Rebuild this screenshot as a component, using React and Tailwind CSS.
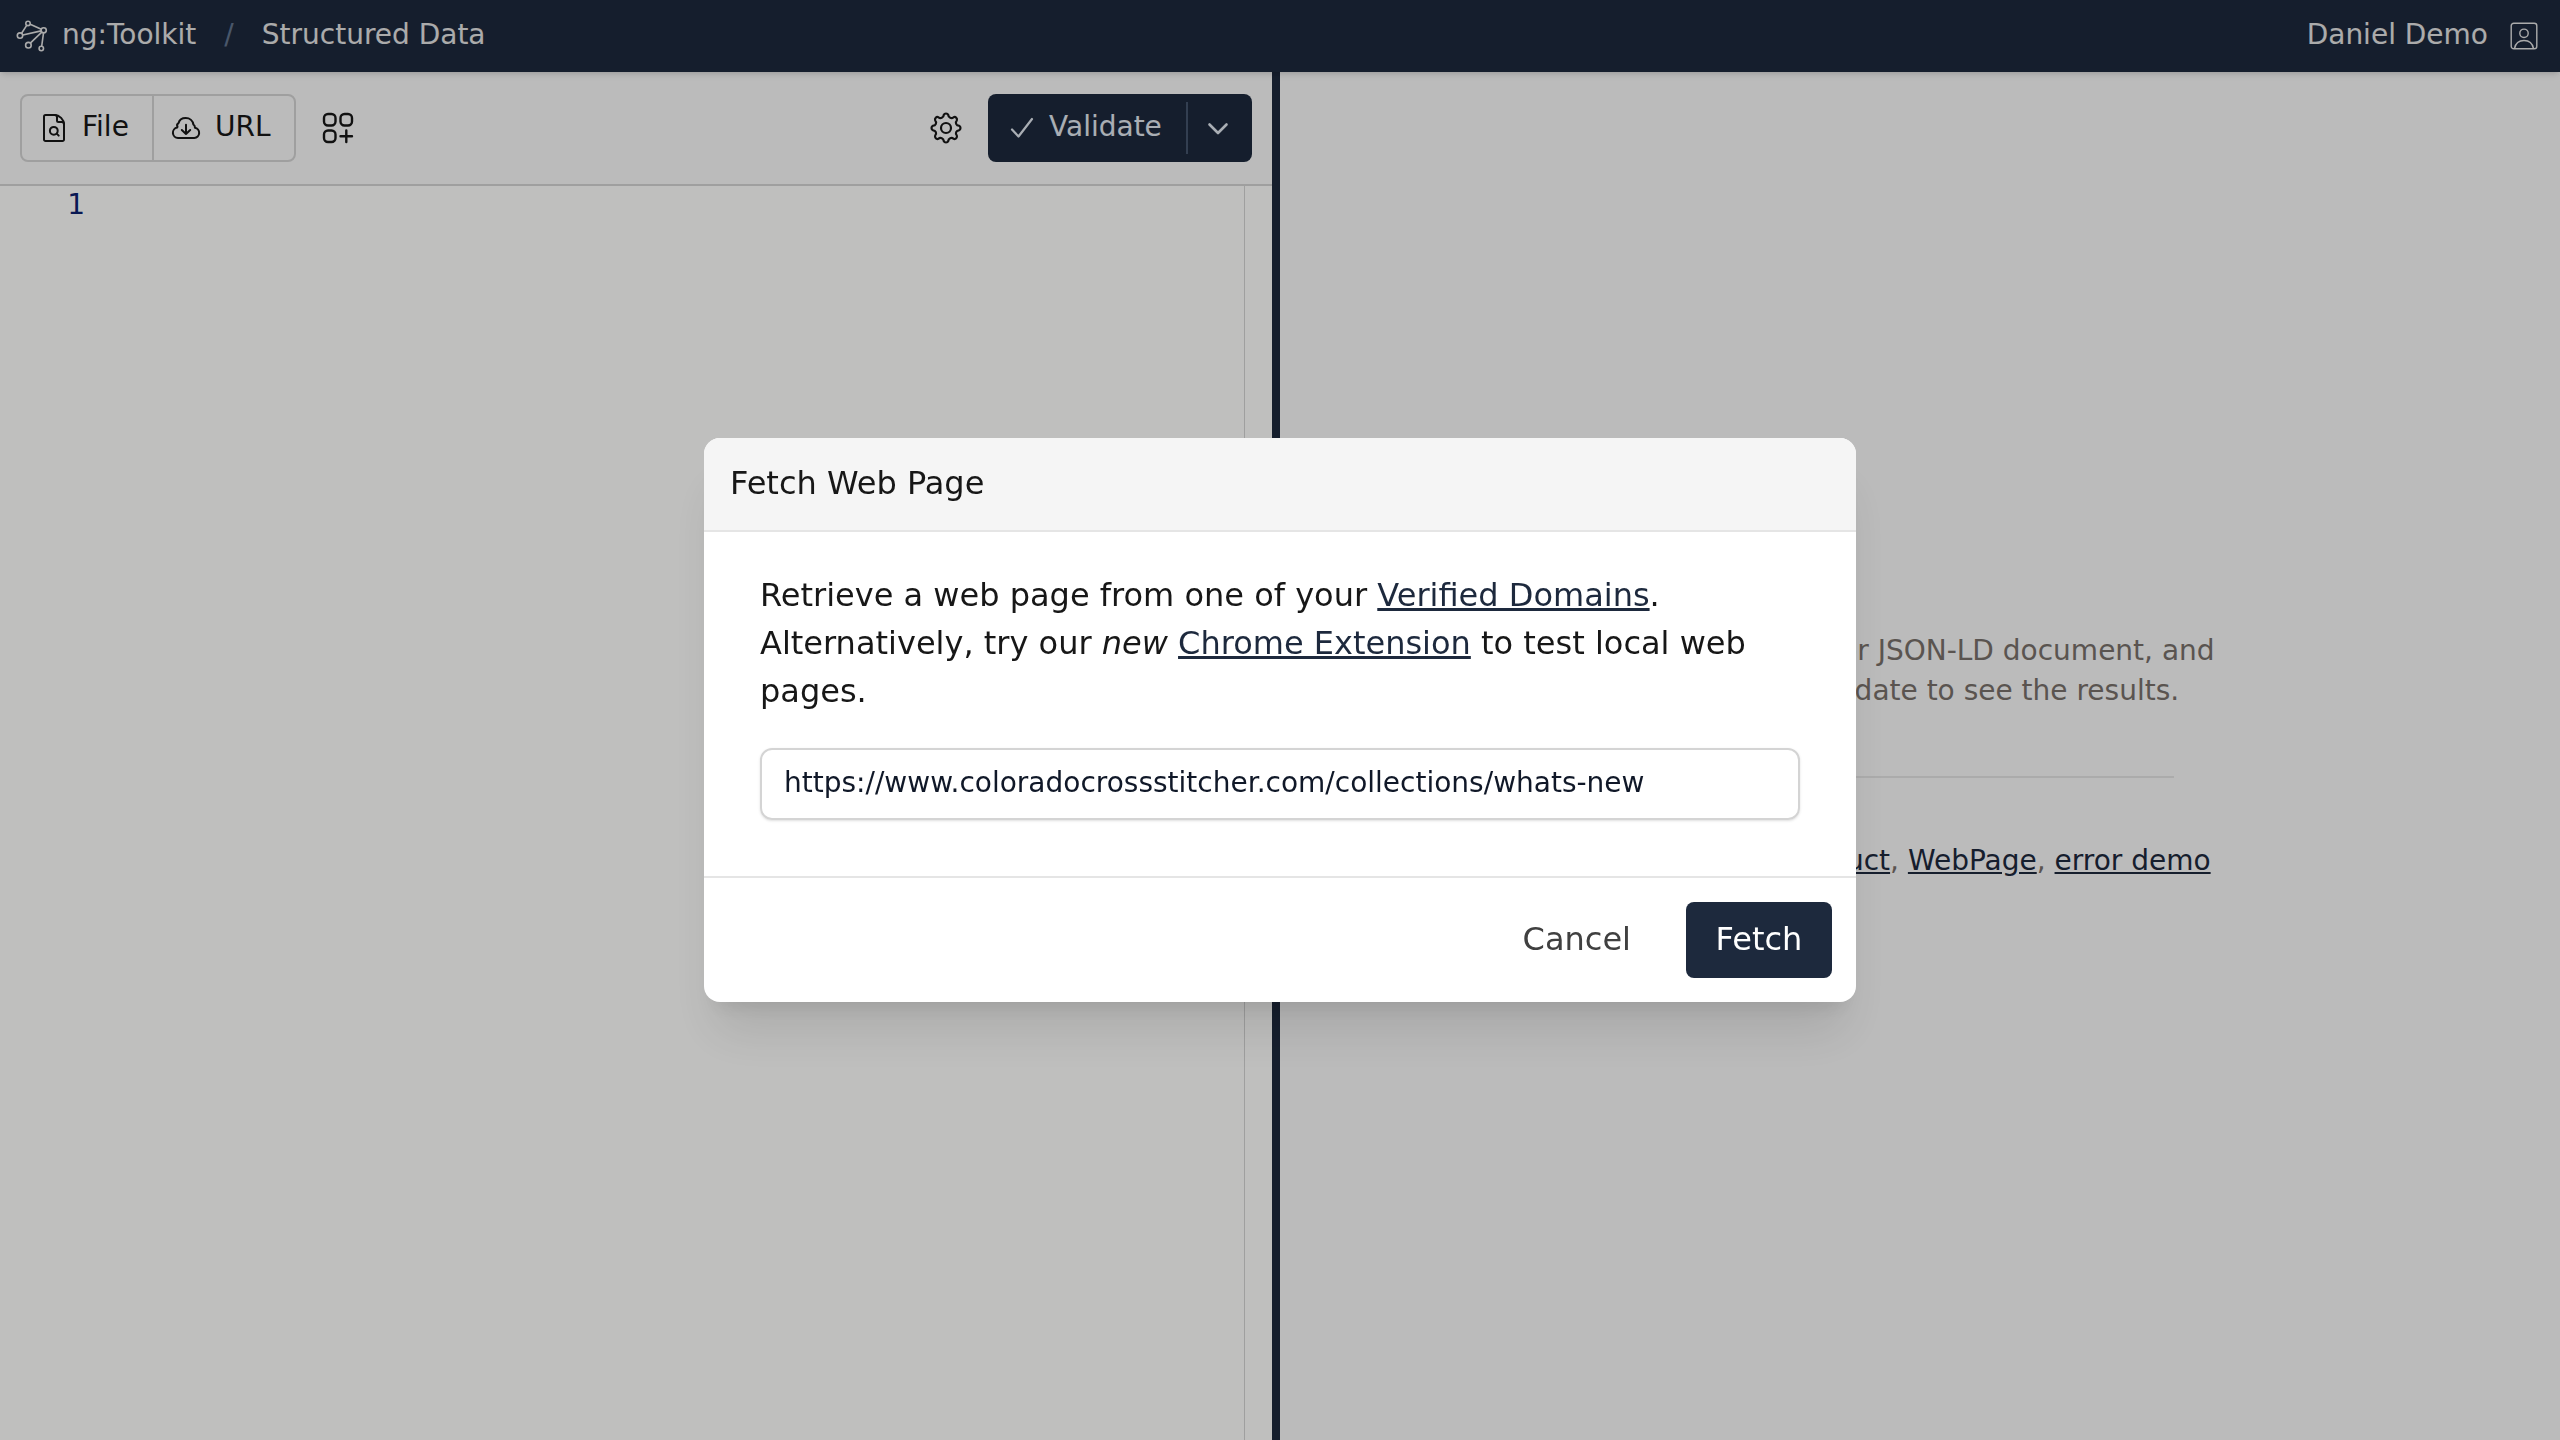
const LINK = "underline text-slate-800";

function GraphLogo() {
  return (
    <svg width="32" height="32" viewBox="0 0 32 32" fill="none" stroke="currentColor" strokeWidth="1.6">
      <circle cx="12" cy="3.4" r="2.2" />
      <circle cx="4" cy="15.6" r="2.7" />
      <circle cx="27.7" cy="10.3" r="2.6" />
      <circle cx="12.4" cy="25.2" r="2.8" />
      <circle cx="25.3" cy="28.5" r="2.2" />
      <path d="M10.7 5.4 5.6 13.2M14.2 4.3 25.3 9.3M6.8 15 25.1 10.9M14.3 23.2 25.8 12.2M27.5 13.1 25.7 26.2" />
    </svg>
  );
}

function FileSearchIcon() {
  return (
    <svg width="24" height="30" viewBox="0 0 24 30" fill="none" stroke="currentColor" strokeWidth="2" strokeLinecap="round" strokeLinejoin="round">
      <path d="M12.5 2H3.5A1.5 1.5 0 0 0 2 3.5v23A1.5 1.5 0 0 0 3.5 28h17a1.5 1.5 0 0 0 1.5-1.5V11.5C22 6.500 17.5 2 12.5 2Z" />
      <path d="M13 2c1.2 0 2 .8 2 2v3.5a1.5 1.5 0 0 0 1.5 1.5H20c1.2 0 2 .8 2 2" />
      <circle cx="11.8" cy="17.8" r="3.9" />
      <path d="m14.7 20.6 2 2" />
    </svg>
  );
}

function CloudDownloadIcon() {
  return (
    <svg width="30" height="24" viewBox="0 0 30 24" fill="none" stroke="currentColor" strokeWidth="2" strokeLinecap="round" strokeLinejoin="round">
      <path d="M7 22a5.3 5.3 0 0 1-.8-10.5 2.5 2.5 0 0 1 .3-.8 2.6 2.6 0 0 1 1-3.5C8.3 4.2 11.2 2 14.7 2c4.3 0 7.2 2.9 7.7 6.5a3.4 3.4 0 0 1 1.5 3.2A5.2 5.2 0 0 1 23.3 22Z" />
      <path d="M15 8.8v9.2m0 0 4.2-4M15 18l-4.2-4" />
    </svg>
  );
}

function AddGridIcon() {
  return (
    <svg width="32" height="32" viewBox="0 0 32 32" fill="none" stroke="currentColor" strokeWidth="2.4" strokeLinecap="round">
      <rect x="2" y="2" width="11.5" height="11.5" rx="4" />
      <rect x="18.5" y="2" width="11.5" height="11.5" rx="4" />
      <rect x="2" y="18.5" width="11.5" height="11.5" rx="4" />
      <path d="M24.3 18.5V30M18.5 24.3H30" />
    </svg>
  );
}

// eight rounded teeth joined by concave arcs
function gearPath(cx, cy, r) {
  const at = (deg) => {
    const a = (deg * Math.PI) / 180;
    return `${(cx + r * Math.cos(a)).toFixed(2)} ${(cy + r * Math.sin(a)).toFixed(2)}`;
  };
  let d = `M${at(-10)}`;
  for (let i = 0; i < 8; i++) {
    d += `A2.5 2.5 0 0 1 ${at(i * 45 + 10)}A3.1 3.1 0 0 0 ${at(i * 45 + 35)}`;
  }
  return d + "Z";
}

function GearIcon() {
  return (
    <svg width="36" height="36" viewBox="0 0 36 36" fill="none" stroke="currentColor" strokeWidth="2.2" strokeLinejoin="round">
      <circle cx="18" cy="18" r="5" />
      <path d={gearPath(18, 18, 13.2)} />
    </svg>
  );
}

function UserSquareIcon() {
  return (
    <svg width="28" height="28" viewBox="0 0 28 28" fill="none" stroke="currentColor" strokeWidth="1.4">
      <rect x="1.2" y="1.2" width="25.6" height="25.6" rx="2.6" />
      <circle cx="14" cy="11.3" r="4.2" />
      <path d="M4.5 26.5c1-5 4.8-8 9.5-8s8.5 3 9.5 8" />
    </svg>
  );
}

function Navbar() {
  return (
    <nav className="relative z-10 flex h-[72px] items-center bg-slate-800 pl-4 pr-[22px] text-neutral-200 shadow-md">
      <GraphLogo />
      <span className="ml-[14px] -mt-0.5">ng:Toolkit</span>
      <span className="ml-7 -mt-0.5 text-slate-500">/</span>
      <span className="ml-7 -mt-0.5">Structured Data</span>
      <span className="ml-auto mr-[22px] -mt-0.5">Daniel Demo</span>
      <UserSquareIcon />
    </nav>
  );
}

function Toolbar() {
  return (
    <div className="flex h-[114px] shrink-0 items-center border-b-2 border-neutral-300 bg-neutral-50 px-5 text-neutral-900">
      <div className="flex h-[68px] rounded-lg border-2 border-neutral-300">
        <button className="flex w-[130px] items-center pl-5">
          <FileSearchIcon />
          <span className="ml-4 -mt-0.5">File</span>
        </button>
        <button className="flex w-[142px] items-center border-l-2 border-neutral-300 pl-[17px]">
          <CloudDownloadIcon />
          <span className="ml-[14px] -mt-0.5">URL</span>
        </button>
      </div>
      <button className="ml-[26px]">
        <AddGridIcon />
      </button>
      <button className="ml-auto">
        <GearIcon />
      </button>
      <div className="ml-6 flex h-[68px] items-center rounded-lg bg-slate-800 text-slate-200">
        <button className="flex w-[198px] items-center pl-[22px]">
          <svg width="24" height="22" viewBox="0 0 24 22" fill="none" stroke="currentColor" strokeWidth="2.2" strokeLinecap="round" strokeLinejoin="round">
            <path d="M2 12.5 8.5 19.5 22 2" />
          </svg>
          <span className="ml-[15px] -mt-0.5">Validate</span>
        </button>
        <button className="flex h-[52px] w-[66px] items-center justify-center border-l-2 border-slate-600 pr-1">
          <svg width="24" height="14" viewBox="0 0 24 14" fill="none" stroke="currentColor" strokeWidth="2.6" strokeLinecap="round" strokeLinejoin="round">
            <path d="m3.5 3.5 8.5 8.5 8.5-8.5" />
          </svg>
        </button>
      </div>
    </div>
  );
}

function Editor() {
  return (
    <div className="flex min-h-0 flex-1 bg-[#fffffe]">
      <div className="w-[85px] text-right text-[#0b216f]">
        <div className="h-[38px] leading-[38px]">1</div>
      </div>
      <div className="flex-1" />
      <div className="w-7 border-l border-[#d4d4d4]" />
    </div>
  );
}

function Results() {
  return (
    <section className="flex flex-1 flex-col items-center bg-neutral-50 pt-[559px] text-center text-stone-500">
      <p className="leading-10">
        Enter an HTML or JSON-LD document, and
        <br />
        then click Validate to see the results.
      </p>
      <hr className="mt-[65px] mb-[63px] w-[508px] border-t-2 border-neutral-200" />
      <p className="leading-10">
        Examples: <a className={LINK}>Product</a>, <a className={LINK}>WebPage</a>, <a className={LINK}>error demo</a>
      </p>
    </section>
  );
}

function FetchDialog() {
  return (
    <div className="fixed inset-0 z-20 flex items-center justify-center bg-black/25">
      <div role="dialog" className="w-[1152px] overflow-hidden rounded-2xl bg-white text-[32px] leading-[48px] text-neutral-900 shadow-[0_40px_50px_-10px_rgba(0,0,0,0.1),0_16px_20px_-12px_rgba(0,0,0,0.1)]">
        <h2 className="h-[94px] border-b-2 border-neutral-200 bg-neutral-100 px-[26px] pt-[21px]">Fetch Web Page</h2>
        <div className="h-[344px] px-14 pt-[39px]">
          <p>
            Retrieve a web page from one of your <a className={LINK}>Verified Domains</a>. Alternatively, try our{" "}
            <em>new</em> <a className={LINK}>Chrome Extension</a> to test local web pages.
          </p>
          <input
            defaultValue="https://www.coloradocrossstitcher.com/collections/whats-new"
            className="mt-[33px] block h-[72px] w-full rounded-xl border-2 border-neutral-300 px-[22px] pb-1 text-[28px] text-gray-900 shadow-sm"
          />
        </div>
        <div className="flex justify-end gap-6 border-t-2 border-neutral-200 p-6">
          <button className="h-[76px] pl-8 pr-[31px] pb-0.5 text-neutral-700">Cancel</button>
          <button className="h-[76px] w-[146px] rounded-lg bg-slate-800 pb-0.5 text-white">Fetch</button>
        </div>
      </div>
    </div>
  );
}

export default function App() {
  return (
    <div className="flex h-[1440px] w-[2560px] flex-col overflow-hidden font-['DejaVu_Sans',sans-serif] text-[28px] leading-10">
      <Navbar />
      <main className="flex min-h-0 flex-1">
        <section className="flex w-[1272px] flex-col">
          <Toolbar />
          <Editor />
        </section>
        <div className="w-2 bg-slate-800" />
        <Results />
      </main>
      <FetchDialog />
    </div>
  );
}
